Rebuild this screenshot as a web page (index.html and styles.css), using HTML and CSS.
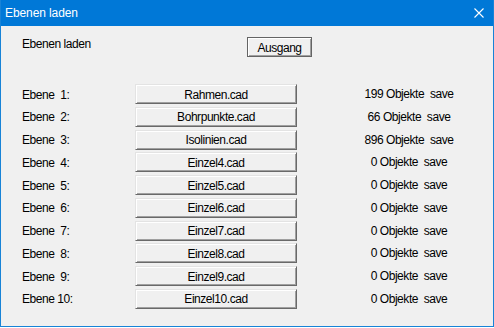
FILE: index.html
```html
<!DOCTYPE html>
<html lang="de">
<head>
    <meta charset="UTF-8">
    <title>Ebenen laden</title>
    <link rel="stylesheet" href="styles.css">
</head>
<body>
    <div class="window">
        <div class="titlebar">
            <span class="title">Ebenen laden</span>
            <svg class="close" width="10" height="10" viewBox="0 0 10 10">
                <path d="M0.5 0.5 L9.5 9.5 M9.5 0.5 L0.5 9.5" stroke="#fff" stroke-width="1.1" fill="none"/>
            </svg>
        </div>
        <div class="content">
            <div class="header">
                <span class="heading">Ebenen laden</span>
                <button class="btn default">Ausgang</button>
            </div>
            <div class="layers">
                <span class="label">Ebene  1:</span>
                <button class="btn file">Rahmen.cad</button>
                <span class="count">199 Objekte  save</span>

                <span class="label">Ebene  2:</span>
                <button class="btn file">Bohrpunkte.cad</button>
                <span class="count">66 Objekte  save</span>

                <span class="label">Ebene  3:</span>
                <button class="btn file">Isolinien.cad</button>
                <span class="count">896 Objekte  save</span>

                <span class="label">Ebene  4:</span>
                <button class="btn file">Einzel4.cad</button>
                <span class="count">0 Objekte  save</span>

                <span class="label">Ebene  5:</span>
                <button class="btn file">Einzel5.cad</button>
                <span class="count">0 Objekte  save</span>

                <span class="label">Ebene  6:</span>
                <button class="btn file">Einzel6.cad</button>
                <span class="count">0 Objekte  save</span>

                <span class="label">Ebene  7:</span>
                <button class="btn file">Einzel7.cad</button>
                <span class="count">0 Objekte  save</span>

                <span class="label">Ebene  8:</span>
                <button class="btn file">Einzel8.cad</button>
                <span class="count">0 Objekte  save</span>

                <span class="label">Ebene  9:</span>
                <button class="btn file">Einzel9.cad</button>
                <span class="count">0 Objekte  save</span>

                <span class="label">Ebene 10:</span>
                <button class="btn file">Einzel10.cad</button>
                <span class="count">0 Objekte  save</span>
            </div>
        </div>
    </div>
</body>
</html>
```

FILE: styles.css
```css
body {
    margin: 0;
    padding: 0;
    background-color: #ffffff;
    font-family: "Liberation Sans", Arial, sans-serif;
}

.window {
    width: 494px;
    height: 327px;
    box-sizing: border-box;
    border: 1px solid #1883d7;
    border-top: none;
    background-color: #f0f0f0;
}

.titlebar {
    height: 26px;
    background-color: #0078d7;
    display: flex;
    align-items: center;
    justify-content: space-between;
    padding: 0 9px 1px 4px;
    box-sizing: border-box;
}

.title {
    color: #fff;
    font-size: 12px;
    letter-spacing: -0.1px;
}

.close {
    display: block;
}

.content {
    padding: 11px 0 0 21px;
}

.header {
    display: flex;
    align-items: flex-start;
    height: 20px;
}

.heading {
    width: 225px;
    font-size: 12px;
    line-height: 14px;
    letter-spacing: -0.45px;
    color: #000;
}

.btn {
    font-family: "Liberation Sans", Arial, sans-serif;
    font-size: 12px;
    letter-spacing: -0.45px;
    color: #000;
    background-color: #f0f0f0;
    margin: 0;
    padding: 0;
    box-sizing: border-box;
    cursor: default;
}

.default {
    width: 65px;
    height: 20px;
    border: 1px solid #646464;
    box-shadow: inset 1px 1px #ffffff, inset -1px -1px #a0a0a0;
    padding-top: 1px;
}

.layers {
    margin-top: 27px;
    display: grid;
    grid-template-columns: 113px 162px 1fr;
    grid-auto-rows: 20px;
    row-gap: 2.78px;
    align-items: center;
}

.label {
    font-size: 12px;
    letter-spacing: -0.45px;
    color: #000;
    white-space: pre;
    padding-top: 1px;
}

.file {
    height: 20px;
    border: 1px solid;
    border-color: #e3e3e3 #696969 #696969 #e3e3e3;
    box-shadow: inset 1px 1px #ffffff, inset -1px -1px #a0a0a0;
    padding-top: 1px;
}

.count {
    font-size: 12px;
    letter-spacing: -0.45px;
    color: #000;
    white-space: pre;
    text-align: center;
    padding-left: 30px;
    padding-right: 2px;
}
```
